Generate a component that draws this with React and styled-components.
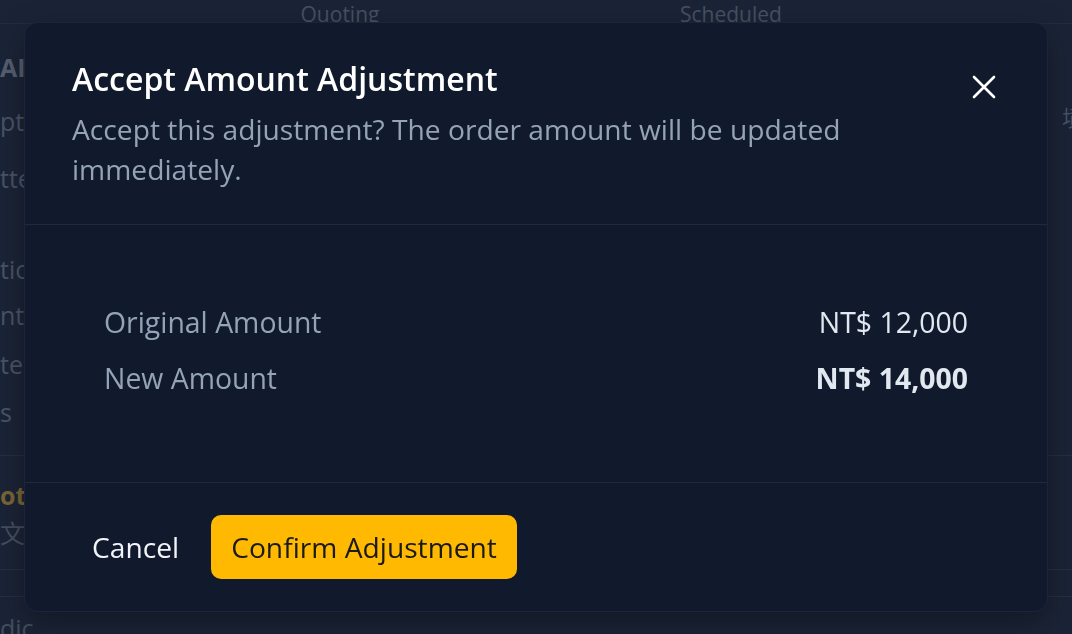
import styled, { createGlobalStyle } from "styled-components";

const GlobalStyle = createGlobalStyle`
  html, body {
    margin: 0;
    padding: 0;
    background: #1b2437;
    overflow: hidden;
  }
  body {
    font-family: "Open Sans", "Noto Sans", "Noto Sans CJK TC", sans-serif;
  }
  * {
    box-sizing: border-box;
  }
`;

/* page behind the dialog */
const Page = styled.div`
  width: 1072px;
  height: 634px;
  display: flex;
  flex-direction: column;
  background: #1b2437;
`;

const TabBar = styled.div`
  height: 24px;
  flex: none;
  display: flex;
  align-items: flex-end;
  border-bottom: 1px solid #232d40;
`;

const Tab = styled.div`
  width: ${(p) => p.$w}px;
  text-align: center;
  font-size: 21px;
  line-height: 26px;
  color: #465165;
  transform: translateY(4px);
`;

const Section = styled.div`
  height: ${(p) => p.$h}px;
  flex: none;
  display: flex;
  justify-content: space-between;
  border-bottom: 1px solid #252f42;
  overflow: hidden;
`;

const SideList = styled.div`
  width: 60px;
  display: flex;
  flex-direction: column;
  gap: ${(p) => p.$gap}px;
  padding-top: ${(p) => p.$top}px;
`;

const SideText = styled.div`
  font-size: 25px;
  line-height: 30px;
  margin-top: ${(p) => p.$mt || 0}px;
  font-weight: ${(p) => (p.$bold ? 700 : 400)};
  color: ${(p) => p.$color || "#4a5467"};
  white-space: nowrap;
`;

const RightCell = styled.div`
  width: 10px;
  padding-top: 78px;
  font-size: 22px;
  line-height: 30px;
  color: #465165;
  white-space: nowrap;
`;

/* dialog */
const Overlay = styled.div`
  position: fixed;
  inset: 0;
  display: flex;
  align-items: center;
  justify-content: center;
`;

const Dialog = styled.div`
  width: 1024px;
  background: #111a2c;
  border: 1px solid #1c2537;
  border-radius: 14px;
  color: #f1f5f9;
  display: flex;
  flex-direction: column;
  box-shadow: 0 10px 30px rgba(0, 0, 0, 0.35);
`;

const Header = styled.div`
  position: relative;
  padding: 36px 96px 35px 47px;
  border-bottom: 1px solid #1f2a3c;
`;

const Title = styled.h2`
  margin: 0;
  font-size: 32px;
  line-height: 40px;
  font-weight: 600;
  color: #ffffff;
`;

const Subtitle = styled.p`
  margin: 10px 0 0;
  font-size: 28.2px;
  line-height: 40px;
  color: #94a3b8;
`;

const CloseButton = styled.button`
  position: absolute;
  top: 52px;
  right: 51px;
  width: 24px;
  height: 24px;
  padding: 0;
  border: none;
  background: none;
  color: #ffffff;
  cursor: pointer;
  display: flex;
`;

const Body = styled.div`
  padding: 45px 47px 52px;
  border-bottom: 1px solid #1f2a3c;
`;

const Summary = styled.div`
  padding: 32px;
  display: flex;
  flex-direction: column;
  gap: 16px;
`;

const Row = styled.div`
  display: flex;
  justify-content: space-between;
  align-items: center;
  font-size: 28.4px;
  line-height: 40px;
`;

const Label = styled.span`
  color: #94a3b8;
`;

const Value = styled.span`
  color: #e2e8f0;
  font-weight: ${(p) => (p.$strong ? 700 : 400)};
`;

const Footer = styled.div`
  padding: 32px 47px;
  display: flex;
  align-items: center;
  gap: 12px;
`;

const Button = styled.button`
  height: 64px;
  padding: 0 20px;
  border: none;
  border-radius: 10px;
  font-family: inherit;
  font-size: 28.2px;
  cursor: pointer;
  background: ${(p) => (p.$primary ? "#ffb900" : "transparent")};
  color: ${(p) => (p.$primary ? "#1a1a1a" : "#f1f5f9")};
`;

function CloseIcon() {
  return (
    <svg width="24" height="24" viewBox="0 0 24 24" fill="none">
      <path
        d="M2 2L22 22M22 2L2 22"
        stroke="currentColor"
        strokeWidth="2.6"
        strokeLinecap="round"
      />
    </svg>
  );
}

export default function App() {
  return (
    <>
      <GlobalStyle />
      <Page>
        <TabBar>
          <Tab $w={300} />
          <Tab $w={80}>Quoting</Tab>
          <Tab $w={300} />
          <Tab $w={96}>Scheduled</Tab>
        </TabBar>
        <Section $h={432}>
          <SideList $gap={0} $top={28}>
            <SideText $bold $color="#555f70">AI</SideText>
            <SideText $mt={24}>pt</SideText>
            <SideText $mt={27}>tte</SideText>
            <SideText $mt={61}>tic</SideText>
            <SideText $mt={16}>nt</SideText>
            <SideText $mt={19}>te</SideText>
            <SideText $mt={18}>s</SideText>
          </SideList>
          <RightCell>墳</RightCell>
        </Section>
        <Section $h={114}>
          <SideList $gap={8} $top={24}>
            <SideText $color="#7a6536" $bold>ote</SideText>
            <SideText $color="#454e5f">文章</SideText>
          </SideList>
        </Section>
        <Section $h={27} />
        <Section $h={40}>
          <SideList $gap={0} $top={16}>
            <SideText $color="#454e5f">dic</SideText>
          </SideList>
        </Section>
      </Page>

      <Overlay>
        <Dialog>
          <Header>
            <Title>Accept Amount Adjustment</Title>
            <Subtitle>
              Accept this adjustment? The order amount will be updated
              immediately.
            </Subtitle>
            <CloseButton aria-label="Close">
              <CloseIcon />
            </CloseButton>
          </Header>
          <Body>
            <Summary>
              <Row>
                <Label>Original Amount</Label>
                <Value>NT$ 12,000</Value>
              </Row>
              <Row>
                <Label>New Amount</Label>
                <Value $strong>NT$ 14,000</Value>
              </Row>
            </Summary>
          </Body>
          <Footer>
            <Button>Cancel</Button>
            <Button $primary>Confirm Adjustment</Button>
          </Footer>
        </Dialog>
      </Overlay>
    </>
  );
}
